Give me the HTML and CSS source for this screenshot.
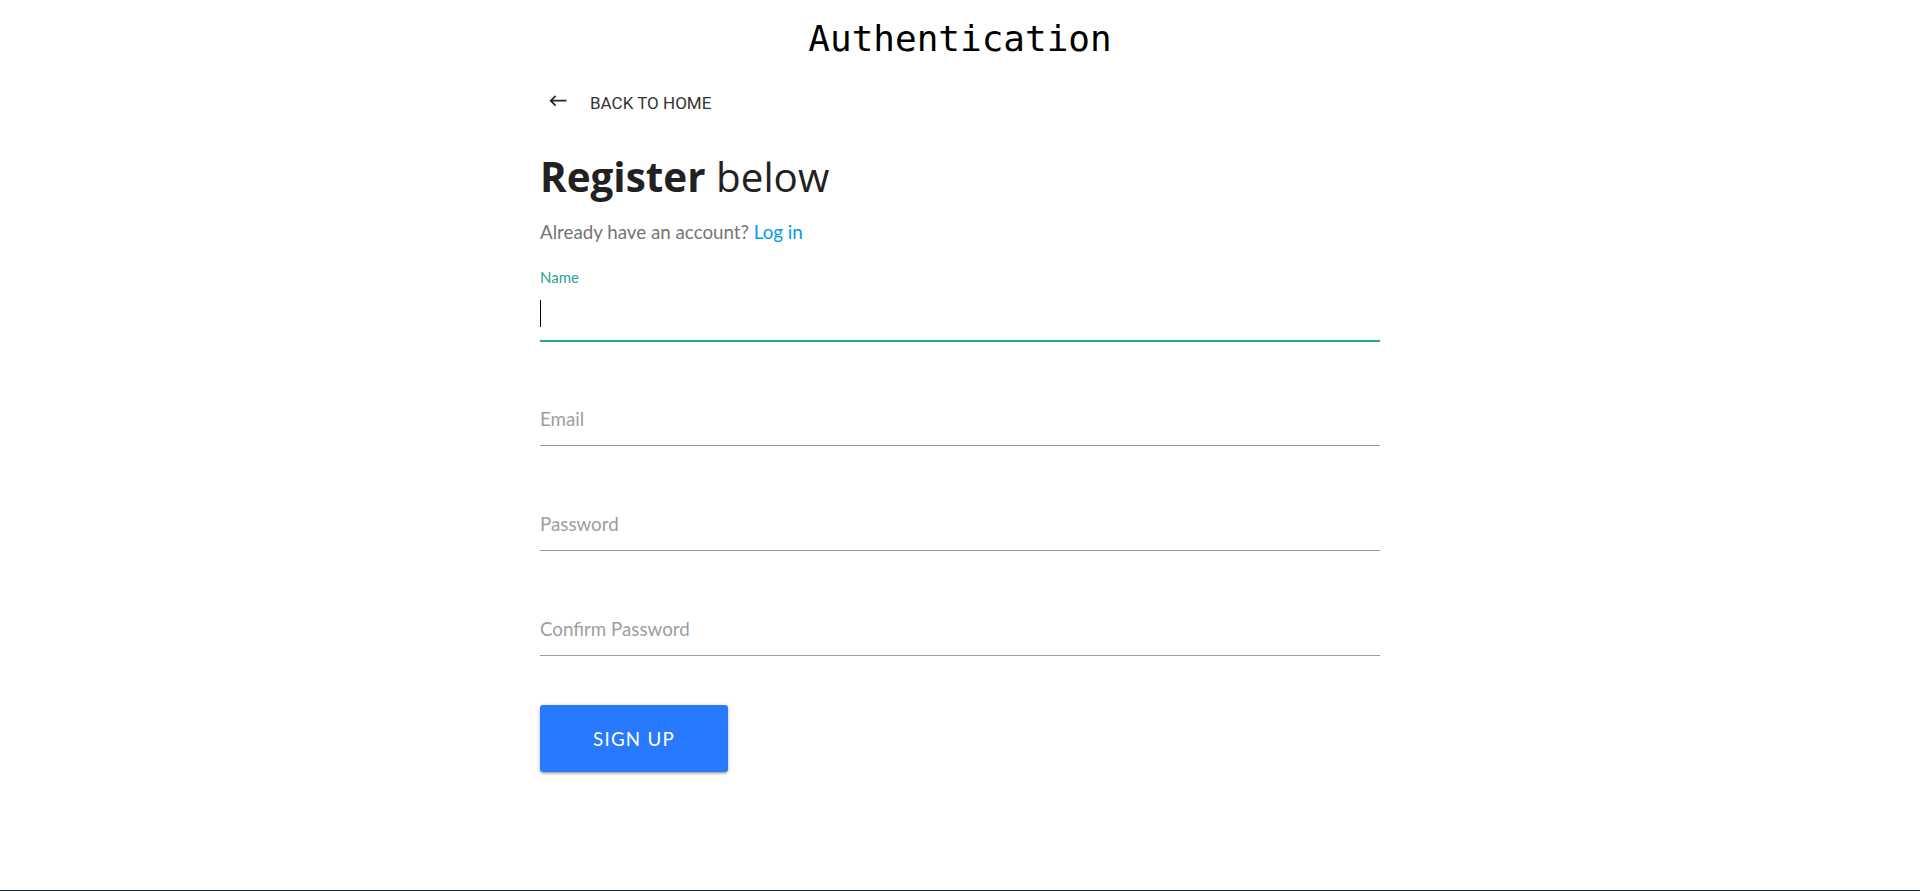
FILE: index.html
```html
<!DOCTYPE html>
<html lang="en">
<head>
<meta charset="utf-8">
<title>Authentication</title>
<link rel="stylesheet" href="styles.css">
</head>
<body>
<div class="page">
  <h1 class="app-title">Authentication</h1>
  <main class="container">
    <a class="back-link" href="#">
      <svg class="back-icon" width="18" height="20" viewBox="0 0 18 20" aria-hidden="true">
        <path d="M17.5 9.7H1.8M6.6 4.8L1.7 9.7L6.6 14.6" fill="none" stroke="#262626" stroke-width="1.7" stroke-linecap="butt" stroke-linejoin="miter"/>
      </svg>
      <span class="back-text">Back to home</span>
    </a>
    <h2 class="heading"><b class="heading-strong">Register</b> <span class="heading-light">below</span></h2>
    <p class="subtext">Already have an account? <a class="link" href="#">Log in</a></p>
    <form class="form">
      <div class="field field-active">
        <label class="field-label">Name</label>
        <div class="field-input"><span class="caret"></span></div>
      </div>
      <div class="field">
        <div class="field-input"><label class="field-placeholder">Email</label></div>
      </div>
      <div class="field">
        <div class="field-input"><label class="field-placeholder">Password</label></div>
      </div>
      <div class="field">
        <div class="field-input"><label class="field-placeholder">Confirm Password</label></div>
      </div>
      <button class="btn" type="button">Sign up</button>
    </form>
  </main>
</div>
<footer class="footer"></footer>
</body>
</html>
```
FILE: styles.css
```css
html, body {
  margin: 0;
  padding: 0;
  background: #fff;
}

body {
  font-family: "Lato", "Open Sans", sans-serif;
  color: rgba(0, 0, 0, 0.87);
}

.page {
  min-height: calc(100vh - 1px);
  display: flex;
  flex-direction: column;
}

.app-title {
  margin: 0;
  padding-top: 17px;
  font-family: "DejaVu Sans Mono", monospace;
  font-size: 36px;
  font-weight: 400;
  line-height: 44px;
  text-align: center;
  color: #000;
}

.container {
  width: 840px;
  margin: 0 auto;
}

.back-link {
  margin-top: 30px;
  display: flex;
  align-items: flex-start;
  height: 24px;
  text-decoration: none;
  color: #333;
}

.back-icon {
  display: block;
  margin-left: 9px;
  margin-top: 0;
  flex: none;
}

.back-text {
  margin-left: 23px;
  font-family: "Roboto", sans-serif;
  font-size: 17px;
  line-height: 24px;
  text-transform: uppercase;
  color: #333;
}

.heading {
  margin: 38px 0 0;
  font-family: "Open Sans", sans-serif;
  font-size: 40.4px;
  line-height: 48px;
  color: #212121;
  font-weight: 400;
}

.heading-strong {
  font-weight: 700;
}

.heading-light {
  font-weight: 400;
}

.subtext {
  margin: 19px 0 0;
  font-size: 18.75px;
  line-height: 24px;
  color: #757575;
}

.link {
  color: #039be5;
  text-decoration: none;
}

.form {
  margin: 24px 0 0;
}

.field {
  padding-top: 18px;
  border-bottom: 1px solid #9e9e9e;
}

.field + .field {
  margin-top: 32px;
}

.field-active {
  padding-top: 0;
  border-bottom-color: #26a69a;
  box-shadow: 0 1px 0 0 #26a69a;
}

.field-label {
  display: block;
  font-size: 15px;
  line-height: 18px;
  color: #26a69a;
}

.field-input {
  height: 54px;
  display: flex;
  align-items: center;
}

.field-placeholder {
  padding-top: 2px;
  font-size: 18.75px;
  line-height: 24px;
  color: #9e9e9e;
}

.caret {
  display: block;
  width: 1px;
  height: 27px;
  background: #000;
}

.btn {
  margin-top: 49px;
  display: block;
  width: 188px;
  height: 67px;
  padding: 0;
  border: none;
  border-radius: 3px;
  background: #2979ff;
  color: #fff;
  font-family: "Lato", sans-serif;
  font-size: 18.75px;
  line-height: 67px;
  letter-spacing: 1.25px;
  text-transform: uppercase;
  text-align: center;
  cursor: pointer;
  box-shadow: 0 2px 2px 0 rgba(0, 0, 0, 0.14), 0 3px 1px -2px rgba(0, 0, 0, 0.12), 0 1px 5px 0 rgba(0, 0, 0, 0.2);
}

.footer {
  height: 1px;
  background: #1c2230;
}
```
